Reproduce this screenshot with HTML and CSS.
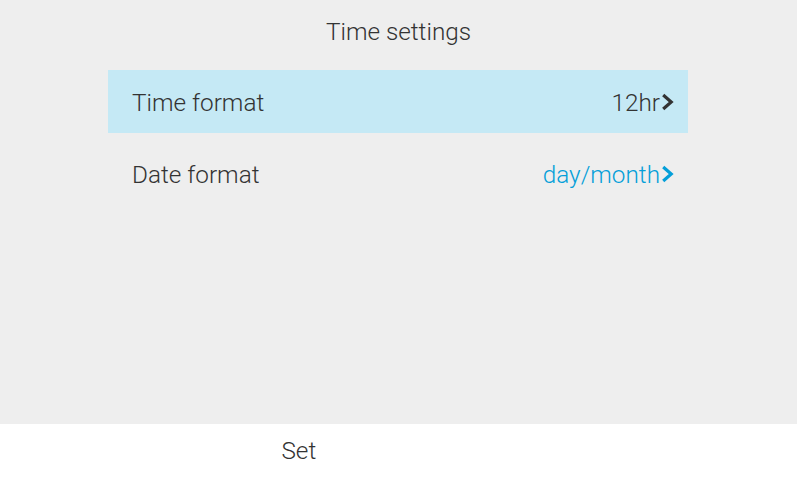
FILE: index.html
```html
<!DOCTYPE html>
<html>
<head>
<meta charset="utf-8">
<link rel="stylesheet" href="styles.css">
</head>
<body>
<div class="screen">
  <div class="main">
    <div class="title">Time settings</div>
    <div class="list">
      <div class="row selected">
        <span class="label">Time format</span>
        <span class="value">12hr<svg class="chev" viewBox="0 0 13 18" width="13" height="18"><path d="M2.2 2 L10.2 9 L2.2 16" fill="none" stroke="currentColor" stroke-width="3.2"/></svg></span>
      </div>
      <div class="row">
        <span class="label">Date format</span>
        <span class="value blue">day/month<svg class="chev" viewBox="0 0 13 18" width="13" height="18"><path d="M2.2 2 L10.2 9 L2.2 16" fill="none" stroke="currentColor" stroke-width="3.2"/></svg></span>
      </div>
    </div>
  </div>
  <div class="softkeys">
    <div class="key"></div>
    <div class="key">Set</div>
    <div class="key"></div>
    <div class="key"></div>
  </div>
</div>
</body>
</html>
```

FILE: styles.css
```css
html, body {
  margin: 0;
  padding: 0;
}
body {
  font-family: Roboto, "Liberation Sans", sans-serif;
  font-weight: 300;
  color: #333333;
}
.screen {
  width: 797px;
  height: 477px;
  display: flex;
  flex-direction: column;
}
.main {
  height: 424px;
  background: #eeeeee;
}
.title {
  text-align: center;
  font-size: 24.3px;
  line-height: 24px;
  padding-top: 20px;
  height: 51px;
  box-sizing: border-box;
}
.list {
  margin: 19px 109px 0 108px;
  display: flex;
  flex-direction: column;
  gap: 9px;
}
.row {
  height: 63px;
  display: flex;
  align-items: center;
  justify-content: space-between;
  padding: 2px 15px 0 24px;
  box-sizing: border-box;
  font-size: 24.3px;
}
.row.selected {
  background: #c5e9f5;
}
.value {
  display: flex;
  align-items: center;
}
.blue {
  color: #049fd9;
}
.chev {
  flex-shrink: 0;
  display: block;
  margin-left: 1px;
  margin-right: -1px;
  margin-top: -1px;
}
.softkeys {
  flex: 1;
  background: #ffffff;
  display: grid;
  grid-template-columns: repeat(4, 1fr);
}
.key {
  display: flex;
  align-items: center;
  justify-content: center;
  font-size: 24.3px;
}
```
